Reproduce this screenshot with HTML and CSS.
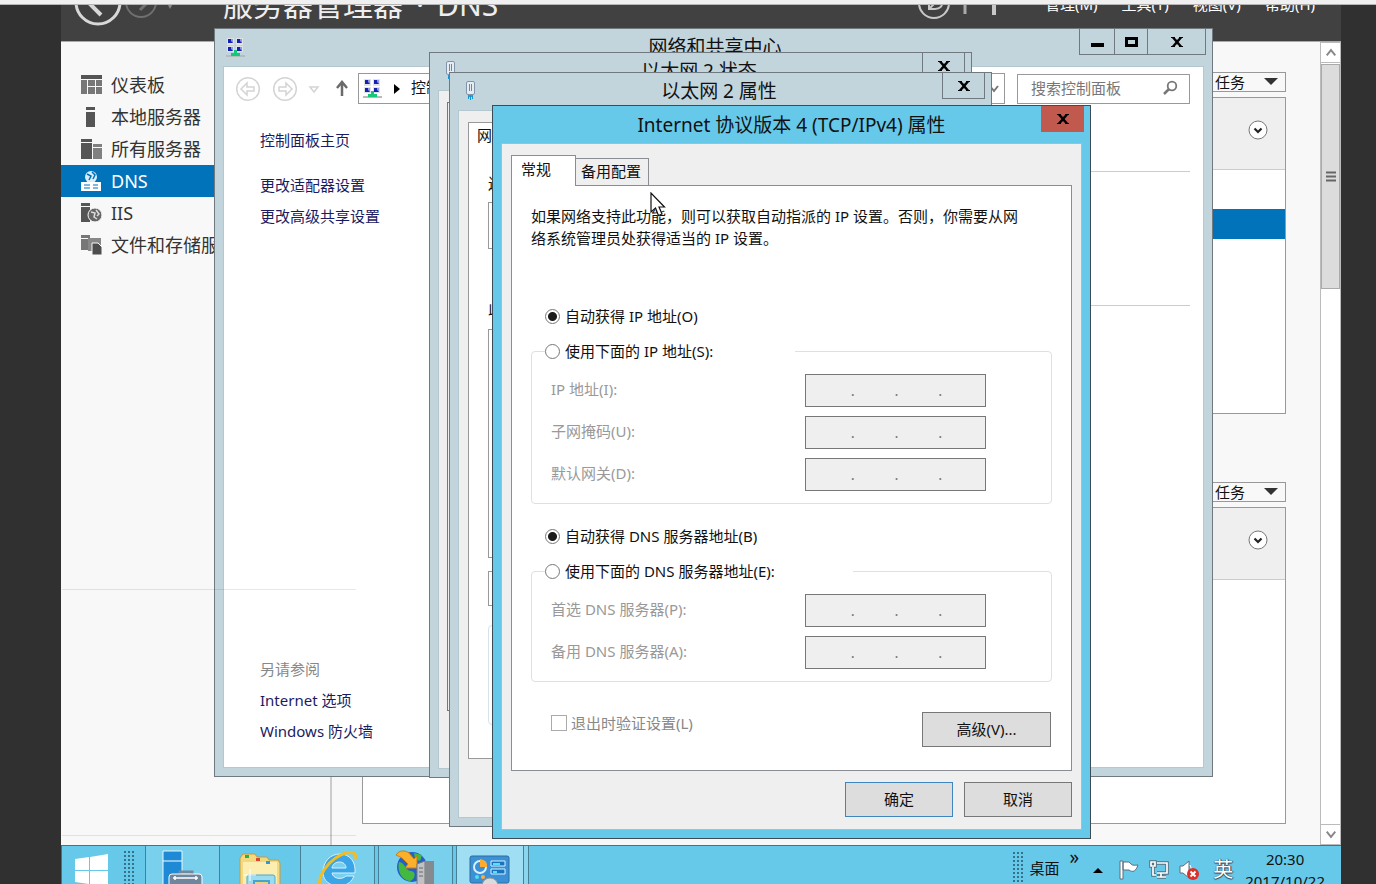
FILE: index.html
```html
<!DOCTYPE html>
<html lang="zh-CN">
<head>
<meta charset="utf-8">
<title>Internet 协议版本 4 (TCP/IPv4) 属性</title>
<link rel="stylesheet" href="styles.css">
</head>
<body>
<svg class="defs" aria-hidden="true">
  <symbol id="net" viewBox="0 0 20 20">
    <path d="M1 0h7v7H1zM10 0h7v7h-7zM1 8h7v6H1zM10 8h7v6h-7z" fill="#dfe3e6"/>
    <path d="M2 1h5v4H2zM11 1h5v4h-5zM2 9h5v4H2zM11 9h5v4h-5z" fill="#8d9ae0"/>
    <path d="M2 1h3v2l2 2H2zM11 1h3v2l2 2h-5zM2 9h3v2l2 2H2zM11 9h3v2l2 2h-5z" fill="#1420b4"/>
    <path d="M0 17h19v2H0z" fill="#b4bcbe"/>
    <path d="M8 12h3v3h3v3H5v-3h3z" fill="#14c878"/>
  </symbol>
  <symbol id="plug" viewBox="0 0 12 20">
    <rect x="1.500" y="1.500" width="8" height="13" rx="1.500" fill="#e4ecf4" stroke="#8494a8"/>
    <path d="M4.500 4v7M6.500 4v7" stroke="#7386a0"/>
    <path d="M3 15h5v2H3z" fill="#6d8796"/>
    <path d="M3.500 16v3M5.500 16v4M7.500 16v3" stroke="#1595d0"/>
  </symbol>
  <symbol id="x" viewBox="0 0 12 10">
    <path d="M0 0h4v1l2 2 2-2V0h4v1H11L7.600 5 11 9h1v1H8V9L6 7 4 9v1H0V9h1l3.400-4L1 1H0z" fill="#000"/>
  </symbol>
  <symbol id="circle-down" viewBox="0 0 20 20">
    <circle cx="10" cy="10" r="9" fill="#fff" stroke="#777"/>
    <path d="M6.500 8.500L10 12l3.500-3.500" fill="none" stroke="#222" stroke-width="2.200"/>
  </symbol>
  <symbol id="grip" viewBox="0 0 12 36">
    <path d="M2 1v36M6 1v36M10 1v36" stroke="#35728a" stroke-width="2" stroke-dasharray="2 2"/>
  </symbol>
</svg>

<div class="top-strip"></div>
<main class="desktop">
  <section class="manager" aria-label="服务器管理器">
    <header class="manager-head">
      <div class="manager-row">
        <svg class="nav-rings" width="100" height="50" viewBox="0 0 100 50" fill="none">
          <circle cx="37" cy="22" r="22" stroke="#d8d8d8" stroke-width="3"/>
          <path d="M48 22H28M40 35L27 22l13-13" stroke="#d8d8d8" stroke-width="4"/>
          <circle cx="80" cy="22" r="15" stroke="#707070" stroke-width="2"/>
          <path d="M72 22h14M79 30l8-8-8-8" stroke="#707070" stroke-width="3"/>
        </svg>
        <span class="crumb-drop">▾</span>
        <h1 class="manager-title"><span>服务器管理器</span><span>·</span><span>DNS</span></h1>
        <svg class="head-tools" width="112" height="40" viewBox="0 0 112 40" fill="none" stroke="#c8c8c8">
          <path d="M4 18h4" stroke-width="2"/>
          <circle cx="37" cy="18" r="15" stroke-width="2"/>
          <path d="M32 18v6h6c5 0 8-3 7-8M32 24l8-8" stroke-width="2"/>
          <path d="M68 8v21" stroke="#aaa" stroke-width="3"/>
          <path d="M97 8v22" stroke-width="4"/>
        </svg>
        <nav class="menu"><a href="#">管理(M)</a><a href="#">工具(T)</a><a href="#">视图(V)</a><a href="#">帮助(H)</a></nav>
      </div>
    </header>
    <div class="manager-body">
      <nav class="side">
        <a href="#"><svg width="22" height="20" viewBox="0 0 22 20" fill="#777"><path d="M0 0h21v4H0z" fill="#555"/><path d="M0 5h6v14H0zM7 5h7v6H7zM15 5h6v6h-6zM7 12h7v7H7zM15 12h6v7h-6z"/></svg>仪表板</a>
        <a href="#"><svg width="22" height="20" viewBox="0 0 22 20" fill="#555"><path d="M5 0h9v3H5zM5 5h9v15H5z"/></svg>本地服务器</a>
        <a href="#"><svg width="22" height="20" viewBox="0 0 22 20" fill="#555"><path d="M0 0h11v3H0zM0 4h11v16H0z"/><path d="M12 5h9v3h-9zM12 9h9v11h-9z" fill="#808080"/></svg>所有服务器</a>
        <a href="#" class="current"><svg width="22" height="20" viewBox="0 0 22 20"><circle cx="10" cy="6" r="6" fill="#d9eefa"/><path d="M6 3l4 2-2 4M11 1l3 3-2 4" fill="none" stroke="#0173bb" stroke-width="1.500"/><path d="M0 11h20v9H0z" fill="#fff"/><path d="M3 14h6M12 14h5M3 17h6M12 17h5" stroke="#0173bb"/></svg>DNS</a>
        <a href="#"><svg width="22" height="20" viewBox="0 0 22 20"><path d="M0 0h9v3H0zM0 4h9v15H0z" fill="#555"/><circle cx="14" cy="12" r="7" fill="#666" stroke="#f8f8f8"/><path d="M10 9l4 1-1 4 3 2M15 7l3 4-2 2" fill="none" stroke="#ddd" stroke-width="1.500"/></svg>IIS</a>
        <a href="#"><svg width="22" height="20" viewBox="0 0 22 20"><path d="M0 0h9v3H0zM0 4h9v11H0z" fill="#777"/><path d="M7 3h13v13H7z" fill="#888"/><path d="M11 8h6l4 4v8H11z" fill="#4d4d4d" stroke="#f8f8f8"/></svg>文件和存储服务</a>
      </nav>
      <div class="tiles">
        <section class="tile">
          <button class="task-btn">任务<span class="tri"></span></button>
          <div class="tile-box"><div class="tile-head"><svg width="20" height="20"><use href="#circle-down"/></svg></div><div class="tile-selected"></div></div>
        </section>
        <section class="tile">
          <button class="task-btn">任务<span class="tri"></span></button>
          <div class="tile-box"><div class="tile-head"><svg width="20" height="20"><use href="#circle-down"/></svg></div></div>
        </section>
      </div>
      <div class="scroll">
        <svg class="scroll-btn" width="20" height="20" viewBox="0 0 20 20"><path d="M5.500 13L10 7.500l4.500 5.500" fill="none" stroke="#888" stroke-width="2"/></svg>
        <div class="thumb"><svg width="10" height="11" viewBox="0 0 10 11"><path d="M0 1.500h10M0 5.500h10M0 9.500h10" stroke="#666" stroke-width="2"/></svg></div>
        <svg class="scroll-btn last" width="20" height="20" viewBox="0 0 20 20"><path d="M5.500 7L10 12.500 14.500 7" fill="none" stroke="#888" stroke-width="2"/></svg>
      </div>
    </div>
  </section>

  <section class="window center-win">
    <header class="title">
      <svg width="20" height="20"><use href="#net"/></svg><h2>网络和共享中心</h2>
      <div class="caption">
        <button class="cap-min" aria-label="最小化"><svg width="13" height="10"><path d="M0 6h13v4H0z"/></svg></button><button class="cap-max" aria-label="最大化"><svg width="13" height="10"><path d="M1.500 1.500h10v7h-10z" fill="none" stroke="#000" stroke-width="3"/></svg></button><button class="cap-wide" aria-label="关闭"><svg width="12" height="10"><use href="#x"/></svg></button>
      </div>
    </header>
    <div class="client white">
      <div class="address-row">
        <svg width="119" height="30" viewBox="0 0 119 30" fill="none" stroke="#d4d4d4" stroke-width="1.500">
          <circle cx="12" cy="15" r="11.300"/><path d="M5 15l6-6v4h7v4h-7v4z"/>
          <circle cx="49" cy="15" r="11.300"/><path d="M56 15l-6-6v4h-7v4h7v4z"/>
          <path d="M74 13h8l-4 5z"/><path d="M106 22V9M101 14l5-6 5 6" stroke="#6a6a6a" stroke-width="2.500"/>
        </svg>
        <div class="address"><svg width="20" height="20"><use href="#net"/></svg><svg width="6" height="10"><path d="M0 0l6 5-6 5z"/></svg><span>控制面板</span><svg class="address-drop" width="10" height="8" viewBox="0 0 10 8"><path d="M1 1l4 5 4-5" fill="none" stroke="#777" stroke-width="2"/></svg></div>
        <label class="search"><input type="text" placeholder="搜索控制面板" aria-label="搜索控制面板"><svg width="16" height="16" viewBox="0 0 16 16" fill="none" stroke="#777"><circle cx="10" cy="6" r="4.300" stroke-width="1.800"/><path d="M7 9l-5 5" stroke-width="2.500"/></svg></label>
      </div>
      <div class="center-body">
        <nav class="links">
          <a href="#" class="home">控制面板主页</a>
          <a href="#">更改适配器设置</a>
          <a href="#">更改高级共享设置</a>
          <span class="also">另请参阅</span>
          <a href="#">Internet 选项</a>
          <a href="#">Windows 防火墙</a>
        </nav>
        <div class="rules"><hr><hr></div>
      </div>
    </div>
  </section>

  <section class="window status-win">
    <header class="title"><svg width="12" height="20"><use href="#plug"/></svg><h2>以太网 2 状态</h2><div class="caption"><button aria-label="关闭"><svg width="12" height="10"><use href="#x"/></svg></button></div></header>
    <div class="client"><div class="status-panel"></div></div>
  </section>

  <section class="window props-win">
    <header class="title"><svg width="12" height="20"><use href="#plug"/></svg><h2>以太网 2 属性</h2><div class="caption"><button aria-label="关闭"><svg width="12" height="10"><use href="#x"/></svg></button></div></header>
    <div class="client">
      <div class="props-panel">
        <span class="props-tab">网络</span>
        <span class="props-label">连接时使用:</span>
        <div class="props-box adapter"></div>
        <span class="props-label">此连接使用下列项目(O):</span>
        <div class="props-box list"></div>
        <div class="props-box install"></div>
        <div class="props-box desc"></div>
      </div>
    </div>
  </section>

  <section class="window ip-win" role="dialog" aria-labelledby="ip-title">
    <header class="title"><span></span><h2 id="ip-title">Internet 协议版本 4 (TCP/IPv4) 属性</h2><div class="caption"><button class="red" aria-label="关闭"><svg width="12" height="10"><use href="#x"/></svg></button></div></header>
    <form class="client dialog">
      <div class="tabs" role="tablist"><button type="button" role="tab" aria-selected="true" class="tab on">常规</button><button type="button" role="tab" aria-selected="false" class="tab">备用配置</button></div>
      <div class="panel">
        <p class="intro">如果网络支持此功能，则可以获取自动指派的 IP 设置。否则，你需要从网络系统管理员处获得适当的 IP 设置。</p>
        <label class="choice first"><input type="radio" name="ip" checked>自动获得 IP 地址(O)</label>
        <fieldset>
          <legend class="legend-ip"><label class="choice-in"><input type="radio" name="ip">使用下面的 IP 地址(S):</label></legend>
          <div class="field"><label for="ip1">IP 地址(I):</label><div class="ip"><input id="ip1" disabled><i>.</i><input aria-label="IP 地址 2" disabled><i>.</i><input aria-label="IP 地址 3" disabled><i>.</i><input aria-label="IP 地址 4" disabled></div></div>
          <div class="field"><label for="mask1">子网掩码(U):</label><div class="ip"><input id="mask1" disabled><i>.</i><input aria-label="子网掩码 2" disabled><i>.</i><input aria-label="子网掩码 3" disabled><i>.</i><input aria-label="子网掩码 4" disabled></div></div>
          <div class="field"><label for="gw1">默认网关(D):</label><div class="ip"><input id="gw1" disabled><i>.</i><input aria-label="默认网关 2" disabled><i>.</i><input aria-label="默认网关 3" disabled><i>.</i><input aria-label="默认网关 4" disabled></div></div>
        </fieldset>
        <label class="choice second"><input type="radio" name="dns" checked>自动获得 DNS 服务器地址(B)</label>
        <fieldset>
          <legend class="legend-dns"><label class="choice-in"><input type="radio" name="dns">使用下面的 DNS 服务器地址(E):</label></legend>
          <div class="field"><label for="dns1">首选 DNS 服务器(P):</label><div class="ip"><input id="dns1" disabled><i>.</i><input aria-label="首选 DNS 2" disabled><i>.</i><input aria-label="首选 DNS 3" disabled><i>.</i><input aria-label="首选 DNS 4" disabled></div></div>
          <div class="field"><label for="alt1">备用 DNS 服务器(A):</label><div class="ip"><input id="alt1" disabled><i>.</i><input aria-label="备用 DNS 2" disabled><i>.</i><input aria-label="备用 DNS 3" disabled><i>.</i><input aria-label="备用 DNS 4" disabled></div></div>
        </fieldset>
        <div class="panel-foot">
          <label class="validate"><input type="checkbox" disabled>退出时验证设置(L)</label>
          <button type="button" class="push wide">高级(V)...</button>
        </div>
      </div>
      <div class="dialog-foot"><button type="button" class="push default">确定</button><button type="button" class="push">取消</button></div>
    </form>
  </section>

  <div class="scanline upper"></div>
  <div class="scanline lower"></div>
  <svg class="cursor" width="16" height="26" viewBox="0 0 16 26"><path d="M1 1v19l4.500-4 3 7.500 3.500-1.500-3-7h5.500z" fill="#fff" stroke="#111" stroke-width="1.200"/></svg>

  <footer class="taskbar">
    <button class="start" aria-label="开始"><svg width="36" height="34" viewBox="0 0 36 34"><path d="M1 6l14-2v13H1zM16 4l18-3v16H16zM1 18h14v13L1 29zM16 18h18v15l-18-2z" fill="#fff"/></svg></button>
    <svg class="grip" width="12" height="36"><use href="#grip"/></svg>
    <button class="task open" aria-label="服务器管理器"><svg width="42" height="36" viewBox="0 0 42 36"><path d="M1 1h19v34H1z" fill="#1e8ad6" stroke="#e8f6fc"/><path d="M1 11h19" stroke="#fff"/><path d="M18 22h12v4H18z" fill="none" stroke="#72889c" stroke-width="3"/><rect x="7" y="24" width="33" height="16" rx="3" fill="#6f869c" stroke="#fff"/><path d="M11 28h25M13 26v4M34 26v4" stroke="#fff" stroke-width="1.500"/></svg></button>
    <button class="task explorer" aria-label="文件资源管理器"><svg width="42" height="34" viewBox="0 0 42 34"><path d="M1 34V5l3-4h12l2 3h10l2 3h9l2 3v24z" fill="#f3d87d" stroke="#c19b45"/><path d="M4 9h34v25H4z" fill="#fbeeb0"/><path d="M6 2h4v3H6z" fill="#20b44a"/><path d="M17 5h4v3h-4z" fill="#d6482d"/><path d="M27 8h4v3h-4z" fill="#2b9be0"/><path d="M8 34V24q0-2 2-2h24q2 0 2 2v10z" fill="#9bdcf0" stroke="#4ba9cc"/><path d="M15 34v-6h15v6" fill="#e8d27f" stroke="#46a5cf" stroke-width="2"/><path d="M11 16v12M5 22h12" stroke="#fff"/></svg></button>
    <button class="task open" aria-label="Internet Explorer"><svg width="42" height="36" viewBox="0 0 42 36"><path d="M38 23H15c1 6 10 7 14 3h8c-2 5-6 9-13 10h-5C9 34 6 28 6 22 6 12 13 4 23 4s16 8 15 19zM15 18h14c0-8-13-8-14 0z" fill="#3aa6e8" stroke="#d7f1ff"/><path d="M3 36C-1 24 20-1 37 3c2 1 2 4 1 6" fill="none" stroke="#f2bd23" stroke-width="3"/></svg></button>
    <button class="task open net-task" aria-label="网络服务器"><svg width="42" height="36" viewBox="0 0 42 36"><circle cx="17" cy="17" r="15" fill="#2360ca"/><path d="M4 12c6 0 6 9 12 9s4 9-1 10C6 30 2 20 4 12zM19 3l8 2-2 6-5-2z" fill="#45b83f"/><path d="M1 5c3-5 9-5 13-2l5 6 3-3v12H10l3-4-5-5c-2-2-5-3-7-4z" fill="#fbb02b" stroke="#c97c14"/><path d="M22 14l8-3v25h-8z" fill="#bfc3c6" stroke="#777"/><path d="M30 11h9v25h-9z" fill="#858a8e"/><path d="M24 18h4M24 22h4M24 26h4" stroke="#666"/></svg></button>
    <button class="task active" aria-label="控制面板"><svg width="42" height="32" viewBox="0 0 42 32"><rect x="1" y="2" width="39" height="27" rx="2" fill="#3c90d5" stroke="#286e9f"/><circle cx="11" cy="13" r="6" fill="none" stroke="#d8f1ff" stroke-width="2"/><path d="M11 13V5q8 1 7 8z" fill="#ffac2c"/><path d="M22 7h14v5H22zM22 15h14v5H22z" fill="#1874bd" stroke="#d6f4ff"/><path d="M24 10h7M24 18h4" stroke="#5ae0ff" stroke-width="2"/><circle cx="8" cy="23" r="2" fill="#50dfef"/><circle cx="14" cy="23" r="2" fill="#ffad35"/><circle cx="21" cy="32" r="8" fill="#d8dcdf" stroke="#999"/></svg></button>
    <span class="edge"></span>
    <div class="tray">
      <svg class="grip" width="12" height="36"><use href="#grip"/></svg>
      <span class="desk">桌面</span><span class="more">»</span>
      <svg class="up" width="10" height="6"><path d="M0 6l5-5 5 5z"/></svg>
      <svg width="20" height="20" viewBox="0 0 20 20"><path d="M1 1h3v18H1zM4 2h6l2 2c2 2 4 1 7 1-2 6-5 8-9 5H4z" fill="#fff" stroke="#58717c"/></svg>
      <svg width="20" height="20" viewBox="0 0 20 20" fill="none"><path d="M8 3h10v10H8M12 13v4M8 17h9M4 7v8h3M2 2h4v4H2z" stroke="#546e7a" stroke-width="3.500"/><path d="M8 3h10v10H8M12 13v4M8 17h9M4 7v8h3M2 2h4v4H2z" stroke="#fff" stroke-width="1.700"/></svg>
      <svg width="20" height="20" viewBox="0 0 20 20"><path d="M1 6h3l6-5v17l-6-5H1z" fill="#fff" stroke="#58717c"/><path d="M11 5q3 4 0 8" fill="none" stroke="#fff"/><circle cx="14" cy="14" r="6" fill="#dc3028"/><path d="M11.500 11.500l5 5m0-5l-5 5" stroke="#fff" stroke-width="2"/></svg>
      <span class="ime">英</span>
      <div class="clock"><time>20:30</time><time>2017/10/22</time></div>
    </div>
  </footer>
</main>
</body>
</html>
```

FILE: styles.css
```css
* { box-sizing: border-box; }
body {
  margin: 0;
  height: 100vh;
  display: flex;
  flex-direction: column;
  overflow: hidden;
  background: #303030;
  color: #111;
  font: 15px/22px "Noto Sans", "Noto Sans CJK SC", sans-serif;
}
button, input { font: inherit; color: inherit; padding: 0; margin: 0; }
button { border: 0; background: none; }
a { color: inherit; text-decoration: none; }
h1, h2, p { margin: 0; font-weight: 400; }
svg { flex: none; display: block; }
.defs { position: absolute; width: 0; height: 0; }
.top-strip { height: 5px; flex: none; background: #f0f0f0; border-bottom: 1px solid #b5b5b5; }
.desktop {
  position: relative;
  flex: 1;
  min-height: 0;
  margin: 0 35px 0 61px;
  overflow: hidden;
  display: flex;
  flex-direction: column;
}

/* Server manager */
.manager { flex: 1; min-height: 0; display: flex; flex-direction: column; background: #f8f8f8; }
.manager-head { height: 37px; flex: none; overflow: hidden; background: #414141; border-bottom: 1px solid #aaa; color: #eee; }
.manager-row { display: flex; align-items: center; height: 48px; margin-top: -24px; padding-right: 26px; }
.crumb-drop { width: 62px; padding-left: 6px; color: #888; font-size: 12px; }
.manager-title { flex: 1; display: flex; gap: 13px; font-size: 30px; line-height: 44px; }
.menu { display: flex; gap: 24px; padding: 0 0 3px 36px; color: #fff; }
.manager-body { flex: 1; min-height: 0; display: flex; }
.side { width: 271px; flex: none; padding-top: 27px; border-right: 2px solid #ccc; font-size: 18px; line-height: 30px; color: #333; }
.side a { display: flex; align-items: center; gap: 8px; padding: 0 0 1px 20px; height: 32px; }
.side .current { background: #0173bb; color: #fff; }
.tiles { flex: 1; padding: 30px 34px 0 30px; display: flex; flex-direction: column; gap: 68px; }
.tile { display: flex; flex-direction: column; align-items: flex-end; gap: 5px; }
.task-btn { display: flex; align-items: center; gap: 19px; height: 20px; padding: 0 7px 1px 30px; border: 1px solid #999; line-height: 18px; }
.tri { border: 7px solid transparent; border-top-color: #333; border-bottom: 0; }
.tile-box { align-self: stretch; height: 317px; border: 1px solid #999; background: #fff; }
.tile-head { height: 72px; background: #efefef; border-bottom: 1px solid #ccc; display: flex; align-items: center; justify-content: flex-end; padding: 0 17px 7px; }
.tile-selected { margin-top: 39px; height: 30px; background: #0173bb; }
.scroll { width: 21px; display: flex; flex-direction: column; gap: 1px; background: #fff; border: 1px solid #bbb; }
.scroll-btn { border-bottom: 1px solid #bbb; }
.scroll-btn.last { margin-top: auto; border-bottom: 0; border-top: 1px solid #bbb; }
.thumb { height: 225px; display: flex; align-items: center; justify-content: center; background: #dcdcdc; border: 1px solid #aaa; }

/* Windows */
.window { position: absolute; display: flex; flex-direction: column; padding: 0 8px 8px; border: 1px solid #6f797f; background: #c3d5dc; }
.title { display: grid; grid-template-columns: 1fr auto 1fr; align-items: center; height: 37px; flex: none; padding-left: 4px; }
.title h2 { font-size: 19px; line-height: 28px; padding-bottom: 2px; }
.caption { align-self: start; justify-self: end; display: flex; margin-right: -2px; border: 1px solid #6f797f; border-top: 0; }
.caption button { display: flex; align-items: center; justify-content: center; width: 41px; height: 25px; }
.caption button + button { border-left: 1px solid #6f797f; }
.caption .cap-min { width: 34px; }
.caption .cap-max { width: 33px; }
.caption .cap-wide { width: 58px; }
.caption .red { background: #c2594f; }
.client { flex: 1; min-height: 0; border: 1px solid #b5c8d0; background: #efefef; }
.client.white { background: #fff; display: flex; flex-direction: column; }

.center-win { left: 153px; top: 23px; width: 999px; height: 749px; }
.center-win .title { padding-left: 3px; }
.address-row { display: flex; align-items: center; padding: 6px 13px 0 12px; }
.address { display: flex; align-items: center; gap: 11px; flex: 1; height: 31px; margin-left: 3px; padding: 0 5px 0 4px; border: 1px solid #999; }
.address span { padding-bottom: 3px; }
.address-drop { margin-left: auto; }
.search { display: flex; align-items: center; width: 173px; height: 30px; margin-left: 12px; padding: 0 11px 1px 13px; border: 1px solid #999; }
.search input { flex: 1; min-width: 0; border: 0; background: none; outline: 0; }
.search input::placeholder { color: #777; opacity: 1; }
.center-body { flex: 1; display: flex; padding: 25px 13px 25px 36px; }
.links { display: flex; flex-direction: column; gap: 9px; width: 190px; color: #1b1b62; }
.links .home { margin-bottom: 14px; }
.links .also { margin-top: auto; color: #888; }
.rules { flex: 1; padding-top: 42px; }
.rules hr { margin: 0 0 133px; border: 0; border-top: 1px solid #ccc; }

.status-win { left: 368px; top: 47px; width: 543px; height: 726px; }
.status-win .title, .props-win .title { padding: 0 0 0 7px; }
.status-win h2, .props-win h2 { padding-right: 10px; }
.status-win .title > svg, .props-win .title > svg { margin-bottom: 4px; }
.status-win .client { padding: 11px 8px 57px; }
.status-panel { height: 100%; border: 1px solid #777; }
.props-win { left: 388px; top: 67px; width: 543px; height: 755px; }
.props-win .client { padding: 11px 9px 58px; }
.props-panel { display: flex; flex-direction: column; height: 100%; padding: 1px 19px 34px; border: 1px solid #999; background: #fff; }
.props-tab { margin: 0 0 26px -11px; }
.props-box { border: 1px solid #999; flex: none; }
.adapter { height: 47px; margin: 8px 0 48px; }
.list { height: 229px; margin: 10px 0 13px; }
.install { height: 35px; }
.desc { height: 100px; margin-top: 19px; border-color: #d8e2ea; border-radius: 4px; }

.ip-win { left: 431px; top: 100px; width: 599px; background: #66c9ea; border-color: #3d4c54; }
.ip-win .title { padding: 0; }
.ip-win h2 { padding-bottom: 0; }
.ip-win .client { border-color: #8fc6da; }
.dialog { padding: 11px 9px 12px; }
.tabs { display: flex; align-items: flex-end; height: 30px; }
.tab { height: 27px; padding: 0 7px 2px 5px; border: 1px solid #8b8d94; border-left: 0; border-bottom: 0; }
.tab.on { position: relative; width: 65px; height: 31px; margin-bottom: -1px; padding: 0 0 5px 9px; border-left: 1px solid #8b8d94; background: #fff; text-align: left; }
.panel { padding: 19px 19px 23px; border: 1px solid #8b8d94; background: #fff; }
.intro { padding-right: 20px; }
.choice, .choice-in, .validate { display: flex; align-items: center; gap: 5px; }
.choice { padding-left: 14px; }
.choice.first { margin: 56px 0 13px; }
.choice.second { margin: 21px 0 13px; }
input[type="radio"] { appearance: none; width: 15px; height: 15px; border: 1px solid #777; border-radius: 50%; background: #fff; }
input[type="radio"]:checked { background: radial-gradient(circle, #1c1c1c 0 4px, #fff 5px); }
fieldset { min-width: 0; margin: 0; padding: 12px 13px; border: 1px solid #d8e2ea; border-radius: 4px; display: flex; flex-direction: column; gap: 9px; }
legend { padding: 0; }
.legend-ip { width: 250px; }
.legend-dns { width: 308px; }
.field { display: grid; grid-template-columns: 254px 181px; align-items: center; padding-left: 6px; color: #999; }
.field label { padding-bottom: 3px; }
.ip { display: flex; align-items: center; height: 33px; padding: 0 3px 2px 5px; border: 1px solid #777; background: #efefef; color: #777; }
.ip input { flex: 1; min-width: 0; width: 0; height: 22px; border: 0; background: none; }
.ip i { width: 4px; font-style: normal; }
.panel-foot { display: flex; justify-content: space-between; align-items: flex-start; margin-top: 30px; padding: 0 1px 0 20px; }
.validate { gap: 4px; color: #888; }
input[type="checkbox"] { appearance: none; width: 16px; height: 16px; border: 1px solid #aaa; background: #fff; }
.push { width: 108px; height: 35px; padding-bottom: 2px; border: 1px solid #777; background: #ddd; }
.push.wide { width: 129px; }
.push.default { border-color: #3e86bd; }
.dialog-foot { display: flex; justify-content: flex-end; gap: 11px; padding-top: 11px; }

.scanline { position: absolute; left: 1px; width: 294px; height: 1px; background: rgba(0, 0, 0, 0.09); }
.upper { top: 584px; }
.lower { top: 830px; }
.cursor { position: absolute; left: 589px; top: 187px; }

/* Taskbar */
.taskbar { flex: none; display: flex; height: 39px; overflow: hidden; background: #66c9ea; border-top: 1px solid #477485; border-left: 1px solid #477485; }
.start { display: flex; width: 61px; padding: 7px 0 0 12px; }
.grip { margin-top: 4px; }
.task { display: flex; justify-content: center; width: 75px; padding-top: 4px; }
.start + .grip { margin-right: 10px; }
.open { background: #79d0ed; border: solid #477f96; border-width: 0 1px; }
.explorer { width: 80px; padding-top: 7px; }
.net-task { margin-left: 3px; }
.active { width: 68px; margin-left: 3px; padding-top: 8px; background: #a0def3; border: solid #477f96; border-width: 0 1px; }
.edge { width: 5px; background: #8bd6ef; border-right: 1px solid #477f96; }
.tray { display: flex; align-items: flex-start; margin-left: auto; padding-right: 16px; }
.tray > svg { margin: 14px 10px 0 0; }
.tray > .grip { margin: 5px 6px 0 0; }
.tray > .up { margin: 21px 16px 0 0; }
.desk { margin-top: 11px; }
.more { margin: 0 14px 0 10px; font-size: 19px; }
.ime { margin: 13px 12px 0 4px; font-size: 20px; color: #fff; text-shadow: 0 0 1px #345, 1px 0 1px #345, 0 1px 1px #345; }
.clock { display: flex; flex-direction: column; align-items: center; margin-top: 2px; line-height: 22px; }
```
